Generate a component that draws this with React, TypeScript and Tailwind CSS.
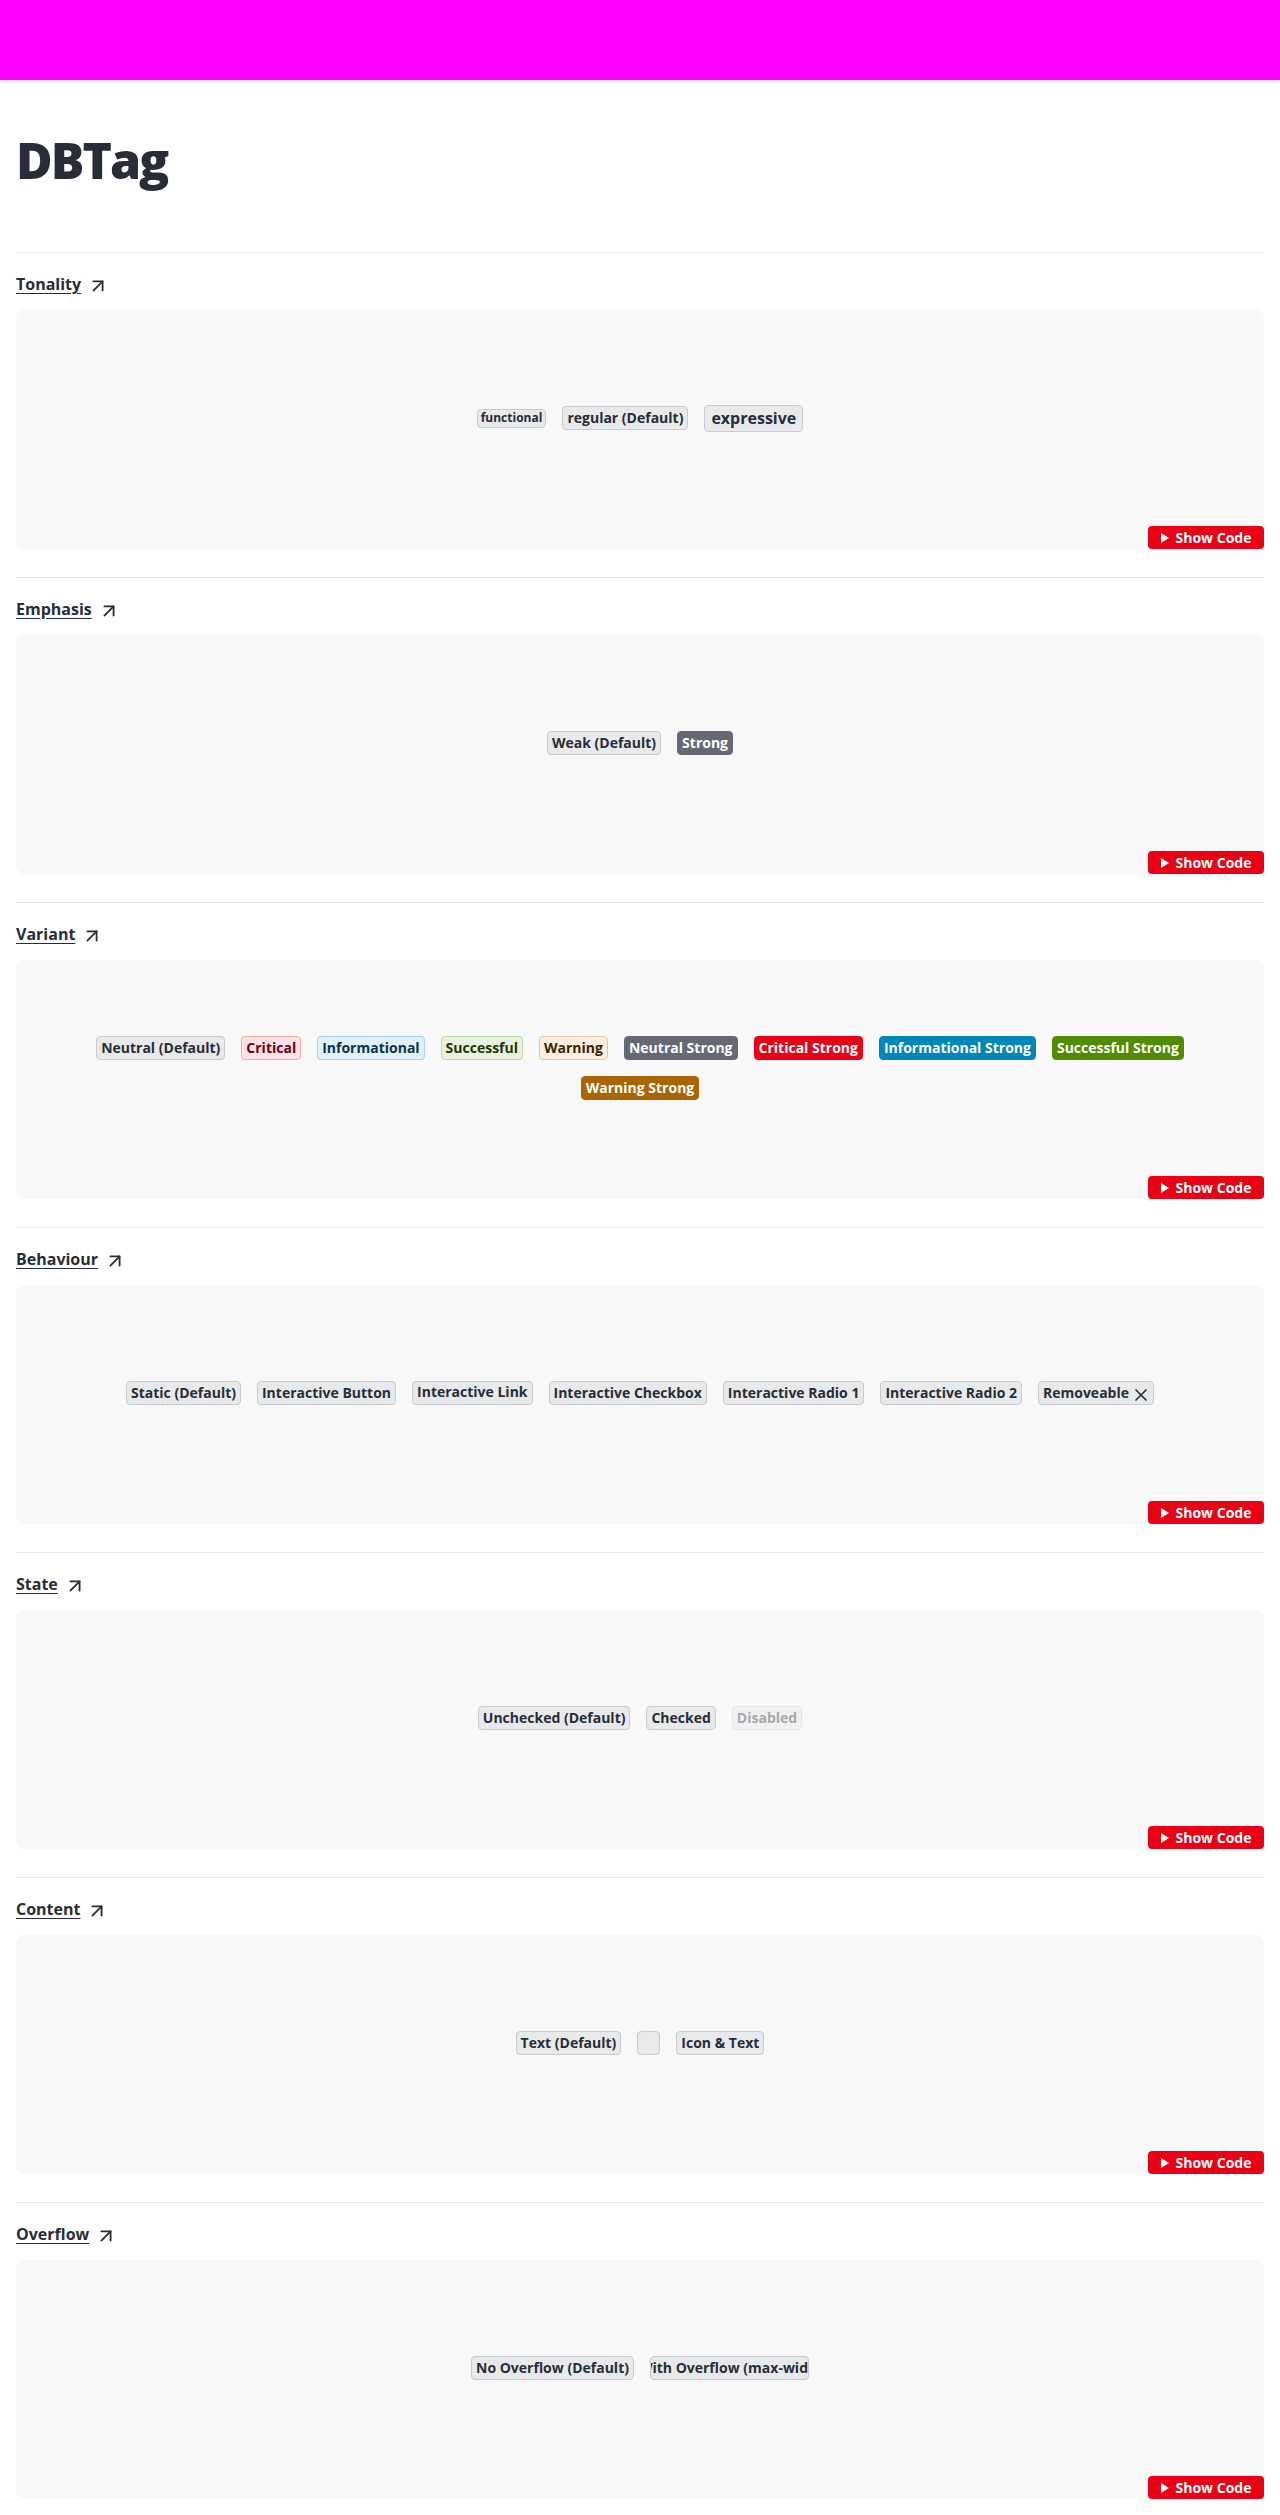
import React from 'react';
import { ArrowUpRight, X } from 'lucide-react';

type Tone = 'neutral' | 'critical' | 'informational' | 'successful' | 'warning';

const weakTones: Record<Tone, string> = {
  neutral: 'bg-[#e8e9eb] border-[#c9cbd0] text-[#282d37]',
  critical: 'bg-[#fde3e5] border-[#f5a9b0] text-[#6b0010]',
  informational: 'bg-[#e1f1f9] border-[#a6d4ea] text-[#0b3447]',
  successful: 'bg-[#e8f2df] border-[#bcdaa5] text-[#1e3700]',
  warning: 'bg-[#fbefdf] border-[#e6c7a0] text-[#3b2200]',
};

const strongTones: Record<Tone, string> = {
  neutral: 'bg-[#646973] border-[#646973] text-white',
  critical: 'bg-[#ec0016] border-[#ec0016] text-white',
  informational: 'bg-[#0087b9] border-[#0087b9] text-white',
  successful: 'bg-[#508b00] border-[#508b00] text-white',
  warning: 'bg-[#a86500] border-[#a86500] text-white',
};

function Tag({
  children,
  tone = 'neutral',
  strong = false,
  size = 'regular',
  className = '',
}: {
  children?: React.ReactNode;
  tone?: Tone;
  strong?: boolean;
  size?: 'functional' | 'regular' | 'expressive';
  className?: string;
}) {
  const sizing =
    size === 'functional'
      ? 'h-[19px] px-[3px] text-xs'
      : size === 'expressive'
        ? 'h-[27px] px-1.5 text-base'
        : 'h-6 px-1 text-sm';
  return (
    <span
      className={`inline-flex items-center whitespace-nowrap rounded-[4px] border font-bold leading-none ${sizing} ${
        strong ? strongTones[tone] : weakTones[tone]
      } ${className}`}
    >
      {children}
    </span>
  );
}

function Section({
  title,
  children,
  last = false,
}: {
  title: string;
  children: React.ReactNode;
  last?: boolean;
}) {
  return (
    <section className={`border-t border-[#e5e5e5] pt-[19px] ${last ? 'pb-4' : 'pb-[28px]'}`}>
      <a href="#" className="inline-flex h-6 items-center gap-[6px] text-base font-bold text-[#282d37] underline underline-offset-[3px]">
        {title}
        <ArrowUpRight size={22} strokeWidth={2} className="mt-1" />
      </a>
      {/* Preview card */}
      <div className="mt-[14px] flex h-[239px] flex-col rounded-lg bg-[#f8f8f8]">
        <div className="flex flex-1 flex-wrap content-center items-center justify-center gap-4 px-8">
          {children}
        </div>
        <div className="flex justify-end">
          <button className="flex h-[23px] w-[116px] items-center justify-center gap-[7px] rounded-[4px] bg-[#ec0016] text-sm font-bold leading-none text-white">
            <svg width="8" height="10" viewBox="0 0 8 10">
              <path d="M0 0 L8 5 L0 10 Z" fill="white" />
            </svg>
            Show Code
          </button>
        </div>
      </div>
    </section>
  );
}

export default function App() {
  return (
    <div className="min-h-screen bg-white font-['Open_Sans',sans-serif] text-[#282d37]">
      <header className="h-20 bg-[#ff00ff] shadow-[0_2px_4px_rgba(0,0,0,0.12)]" />
      <main className="px-4">
        <h1 className="mb-[60px] mt-12 text-[50px] font-extrabold leading-[64px] tracking-[-0.04em]">DBTag</h1>

        <Section title="Tonality">
          <Tag size="functional">functional</Tag>
          <Tag>regular (Default)</Tag>
          <Tag size="expressive">expressive</Tag>
        </Section>

        <Section title="Emphasis">
          <Tag>Weak (Default)</Tag>
          <Tag strong>Strong</Tag>
        </Section>

        <Section title="Variant">
          <Tag>Neutral (Default)</Tag>
          <Tag tone="critical">Critical</Tag>
          <Tag tone="informational">Informational</Tag>
          <Tag tone="successful">Successful</Tag>
          <Tag tone="warning">Warning</Tag>
          <Tag strong>Neutral Strong</Tag>
          <Tag tone="critical" strong>Critical Strong</Tag>
          <Tag tone="informational" strong>Informational Strong</Tag>
          <Tag tone="successful" strong>Successful Strong</Tag>
          <Tag tone="warning" strong>Warning Strong</Tag>
        </Section>

        <Section title="Behaviour">
          <Tag>Static (Default)</Tag>
          <Tag>Interactive Button</Tag>
          <Tag className="pb-[3px]">Interactive Link</Tag>
          <Tag>Interactive Checkbox</Tag>
          <Tag>Interactive Radio 1</Tag>
          <Tag>Interactive Radio 2</Tag>
          <Tag className="gap-0.5 pr-0.5">
            Removeable
            <X size={20} strokeWidth={2} className="mt-1" />
          </Tag>
        </Section>

        <Section title="State">
          <Tag>Unchecked (Default)</Tag>
          <Tag>Checked</Tag>
          <Tag className="opacity-40">Disabled</Tag>
        </Section>

        <Section title="Content">
          <Tag>Text (Default)</Tag>
          <Tag className="w-[23px]" />
          <Tag>Icon &amp; Text</Tag>
        </Section>

        <Section title="Overflow" last>
          <Tag>No Overflow (Default)</Tag>
          <Tag className="w-[159px] justify-center overflow-hidden">
            <span className="ml-[8px] shrink-0">With Overflow (max-width)</span>
          </Tag>
        </Section>
      </main>
    </div>
  );
}
